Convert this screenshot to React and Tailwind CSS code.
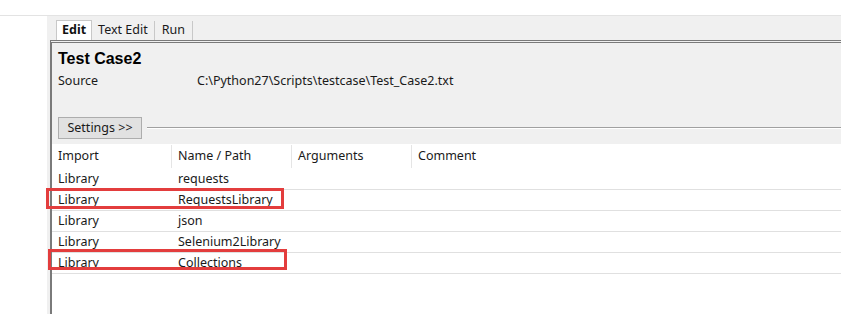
const rows = [
  ["Library", "requests"],
  ["Library", "RequestsLibrary"],
  ["Library", "json"],
  ["Library", "Selenium2Library"],
  ["Library", "Collections"],
];

export default function App() {
  return (
    <div
      className="relative w-[841px] h-[314px] overflow-hidden bg-white text-[12.5px] text-[#1a1a1a]"
      style={{ fontFamily: '"Noto Sans", "Liberation Sans", sans-serif' }}
    >
      <div className="h-[16px] border-b border-[#e3e3e3] bg-white" />

      <div className="flex h-[298px]">
        <div className="w-[47px] bg-white" />

        <div className="flex-1 flex flex-col bg-[#f0f0f0]">
          {/* tabs */}
          <div className="h-[24px] flex items-end pl-[9px] leading-none">
            <div className="h-[20px] px-[5px] flex items-center bg-white border border-b-0 border-[#c8c8c8] font-bold text-[#111]">
              Edit
            </div>
            <div className="h-[19px] px-[6px] flex items-center border-r border-[#c8c8c8]">
              Text Edit
            </div>
            <div className="h-[19px] px-[7px] flex items-center border-r border-[#c8c8c8]">
              Run
            </div>
          </div>

          {/* panel */}
          <div className="flex-1 ml-[3px] flex flex-col border-l-2 border-t-[3px] border-double border-[#7a7a7a]" style={{ borderLeftStyle: "solid" }}>
            <div className="h-[101px] flex flex-col pl-[6px]">
              <div
                className="mt-[6px] text-[16px] font-bold text-black leading-[20px]"
                style={{ fontFamily: '"Liberation Sans", Arial, sans-serif' }}
              >
                Test Case2
              </div>
              <div className="mt-[3px] flex leading-[18px]">
                <span className="w-[139px]">Source</span>
                <span>C:\Python27\Scripts\testcase\Test_Case2.txt</span>
              </div>
              <div className="mt-[27px] flex items-center">
                <button className="h-[22px] w-[84px] border border-[#adadad] bg-[#e1e1e1] leading-none text-[#1a1a1a]">
                  Settings &gt;&gt;
                </button>
                <div className="flex-1 ml-[5px] border-t border-[#a0a0a0] border-b border-b-white" />
              </div>
            </div>

            {/* table */}
            <div className="flex-1 bg-white">
              <div className="h-[25px] flex items-center">
                {["Import", "Name / Path", "Arguments", "Comment"].map((h, i) => (
                  <div
                    key={h}
                    className={
                      i < 3
                        ? "w-[120px] h-[23px] pl-[6px] flex items-center border-r border-[#e5e5e5]"
                        : "w-[120px] h-[23px] pl-[6px] flex items-center"
                    }
                  >
                    {h}
                  </div>
                ))}
              </div>
              {rows.map(([a, b], i) => (
                <div key={i} className="h-[21px] flex items-center border-b border-[#e0e0e0]">
                  <div className="w-[120px] pl-[6px]">{a}</div>
                  <div className="w-[120px] pl-[6px]">{b}</div>
                </div>
              ))}
            </div>
          </div>
        </div>
      </div>

      {/* annotation boxes */}
      <div className="absolute left-[46px] top-[188px] w-[238px] h-[21px] border-[3px] border-[#e33d3d]" />
      <div className="absolute left-[48px] top-[249px] w-[239px] h-[21px] border-[3px] border-[#e33d3d]" />
    </div>
  );
}
